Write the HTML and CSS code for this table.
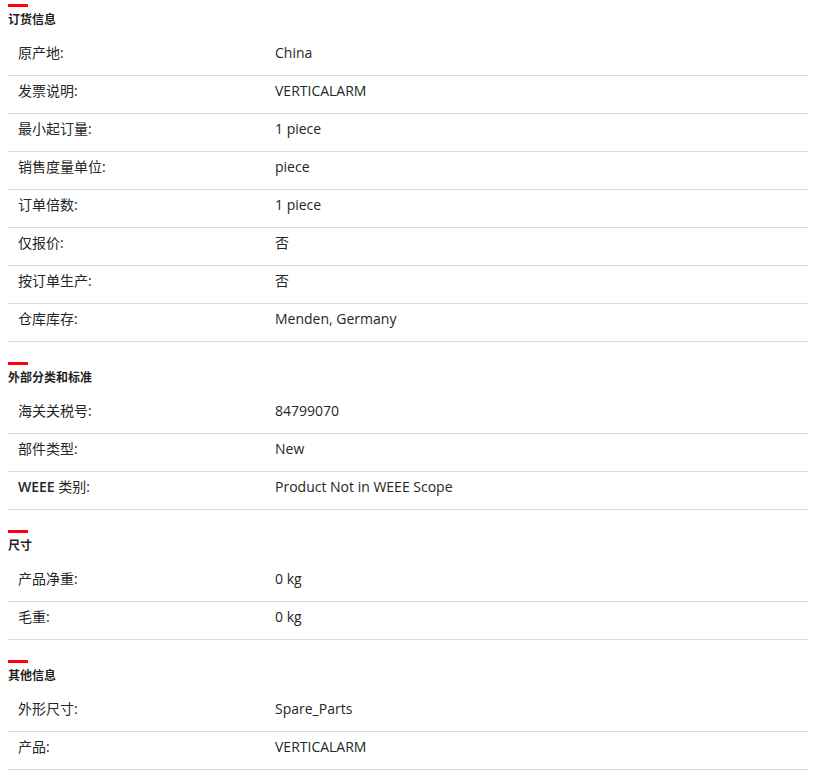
FILE: index.html
```html
<!DOCTYPE html>
<html lang="zh-CN">
<head>
  <meta charset="UTF-8">
  <title>产品详情</title>
  <link rel="stylesheet" href="styles.css">
</head>
<body>
  <div class="specs">
    <section class="spec-group">
      <h3 class="spec-title">订货信息</h3>
      <div class="spec-row"><span class="spec-label">原产地:</span><span class="spec-value">China</span></div>
      <div class="spec-row"><span class="spec-label">发票说明:</span><span class="spec-value">VERTICALARM</span></div>
      <div class="spec-row"><span class="spec-label">最小起订量:</span><span class="spec-value">1 piece</span></div>
      <div class="spec-row"><span class="spec-label">销售度量单位:</span><span class="spec-value">piece</span></div>
      <div class="spec-row"><span class="spec-label">订单倍数:</span><span class="spec-value">1 piece</span></div>
      <div class="spec-row"><span class="spec-label">仅报价:</span><span class="spec-value">否</span></div>
      <div class="spec-row"><span class="spec-label">按订单生产:</span><span class="spec-value">否</span></div>
      <div class="spec-row"><span class="spec-label">仓库库存:</span><span class="spec-value">Menden, Germany</span></div>
    </section>

    <section class="spec-group">
      <h3 class="spec-title">外部分类和标准</h3>
      <div class="spec-row"><span class="spec-label">海关关税号:</span><span class="spec-value">84799070</span></div>
      <div class="spec-row"><span class="spec-label">部件类型:</span><span class="spec-value">New</span></div>
      <div class="spec-row"><span class="spec-label"><b>WEEE</b> 类别:</span><span class="spec-value">Product Not in WEEE Scope</span></div>
    </section>

    <section class="spec-group">
      <h3 class="spec-title">尺寸</h3>
      <div class="spec-row"><span class="spec-label">产品净重:</span><span class="spec-value">0 kg</span></div>
      <div class="spec-row"><span class="spec-label">毛重:</span><span class="spec-value">0 kg</span></div>
    </section>

    <section class="spec-group">
      <h3 class="spec-title">其他信息</h3>
      <div class="spec-row"><span class="spec-label">外形尺寸:</span><span class="spec-value">Spare_Parts</span></div>
      <div class="spec-row"><span class="spec-label">产品:</span><span class="spec-value">VERTICALARM</span></div>
    </section>
  </div>
</body>
</html>
```

FILE: styles.css
```css
body {
  margin: 0;
  padding: 4px 10px 0 8px;
  font-family: "Open Sans", "Noto Sans CJK SC", sans-serif;
  font-size: 14px;
  color: #262626;
  background: #fff;
}

.specs {
  width: 800px;
}

.spec-group + .spec-group {
  margin-top: 20px;
}

/* red accent bar above each group title */
.spec-title {
  margin: 0 0 10px;
  font-size: 12px;
  font-weight: 700;
  line-height: 16px;
  color: #1f1f1f;
}

.spec-title::before {
  content: "";
  display: block;
  width: 20px;
  height: 3px;
  margin-bottom: 5px;
  background-color: #ff000f;
}

.spec-row {
  display: grid;
  grid-template-columns: 257px 1fr;
  height: 20px;
  padding: 5px 10px 12px;
  line-height: 20px;
  border-bottom: 1px solid #dcdcdc;
}

.spec-label b {
  font-weight: 600;
}
```
